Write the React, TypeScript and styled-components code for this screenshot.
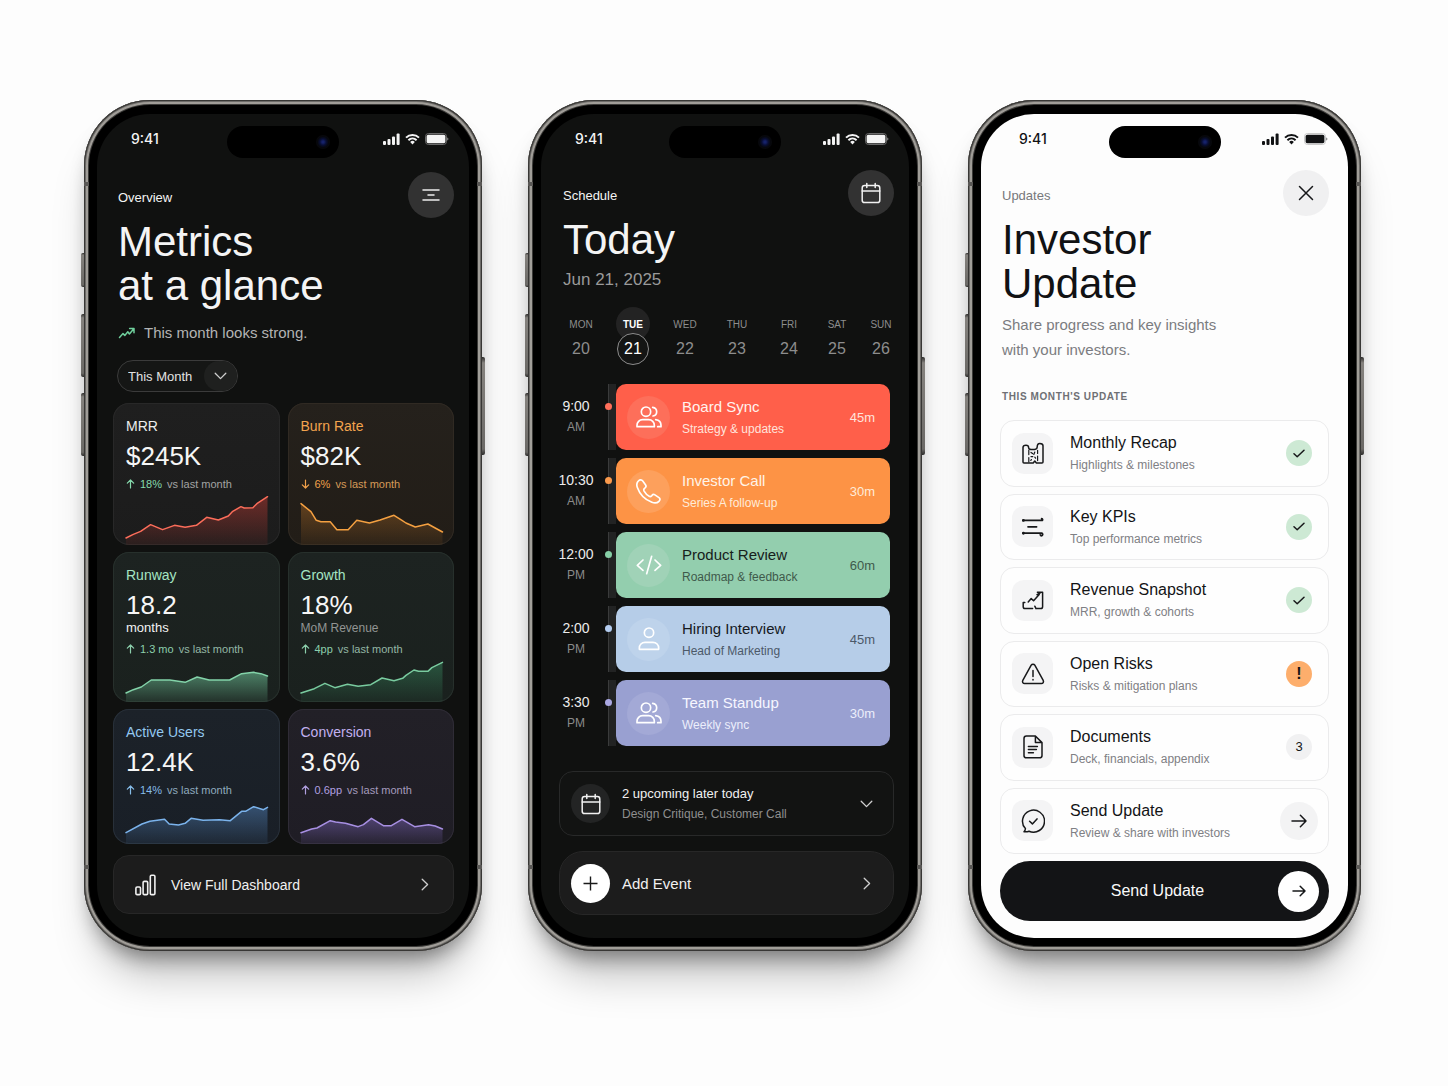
import React from "react";
import styled, { createGlobalStyle, css } from "styled-components";

const GlobalStyle = createGlobalStyle`
  *, *::before, *::after { box-sizing: border-box; }
  body {
    margin: 0;
    background: #fdfdfd;
    font-family: "Liberation Sans", Arial, sans-serif;
    -webkit-font-smoothing: antialiased;
  }
  h1, h2, h3, p, ul, ol { margin: 0; padding: 0; font-weight: 400; }
  ul, ol { list-style: none; }
  button, select { font: inherit; color: inherit; cursor: pointer; }
  svg { display: block; flex: none; }
`;

/* ---------- Page and device frame ---------- */

const Page = styled.main`
  display: grid;
  grid-template-columns: 398fr 394fr 393fr;
  align-items: start;
  gap: 46px;
  padding: 100px 87px 135px 84px;

  @media (max-width: 1240px) {
    grid-template-columns: minmax(0, 398px);
    justify-content: center;
    padding: 40px 20px 100px;
  }
`;

const Device = styled.section`
  position: relative;
  padding: 14px 13px 13px;
  border-radius: 66px;
  background: #000;
  box-shadow:
    inset 0 0 0 1px #383735,
    inset 0 0 0 2px #6d6b68,
    inset 0 0 0 4px #a09d98,
    inset 0 0 0 5px #3b3a38,
    0 14px 20px -8px rgba(0, 0, 0, 0.4),
    0 36px 44px -14px rgba(0, 0, 0, 0.26);
`;

const SideKey = styled.span<{ $side: "left" | "right"; $top: number; $length: number }>`
  position: absolute;
  ${(p) => p.$side}: -3px;
  top: ${(p) => p.$top}px;
  width: 3px;
  height: ${(p) => p.$length}px;
  border-radius: ${(p) => (p.$side === "left" ? "2px 0 0 2px" : "0 2px 2px 0")};
  background: linear-gradient(#2c2b2a, #85827e 6%, #6b6966 94%, #2c2b2a);
`;

const Antenna = styled.span<{ $side: "left" | "right"; $end: "top" | "bottom" }>`
  position: absolute;
  ${(p) => p.$side}: 0;
  ${(p) => p.$end}: 82px;
  width: 5px;
  height: 4px;
  background: #5a5856;
`;

const Screen = styled.div<{ $light?: boolean }>`
  overflow: hidden;
  border-radius: 53px;
  background: ${(p) => (p.$light ? "#fdfdfd" : "#101110")};
  color: ${(p) => (p.$light ? "#111214" : "#f4f4f4")};
`;

const StatusBar = styled.div`
  display: grid;
  grid-template-columns: 1fr 112px 1fr;
  align-items: center;
  padding-top: 12px;
`;

const Clock = styled.time<{ $light?: boolean }>`
  padding: 0 0 6px ${(p) => (p.$light ? 38 : 34)}px;
  font: 500 14px/20px Inter, "Liberation Sans", sans-serif;
`;

const Island = styled.div`
  display: flex;
  align-items: center;
  justify-content: flex-end;
  height: 32px;
  padding-right: 9px;
  border-radius: 16px;
  background: #000;
`;

const Camera = styled.span`
  width: 14px;
  height: 14px;
  border-radius: 50%;
  background: radial-gradient(circle, #16226a 0 10%, #080e34 32%, #06070c 56%, #0b0b0d 100%);
`;

const StatusIcons = styled.div`
  display: flex;
  align-items: center;
  justify-content: flex-end;
  gap: 5px;
  padding: 0 20px 6px 0;
`;

const Content = styled.div<{ $pad: string }>`
  padding: ${(p) => p.$pad};
`;

function StatusGlyphs({ light }: { light?: boolean }) {
  const shell = light ? "#c9c9c9" : "#6a6a6a";
  return (
    <StatusIcons>
      <svg width="17" height="12" viewBox="0 0 17 12" fill="currentColor" aria-hidden="true">
        <rect x="0" y="8" width="3" height="4" rx="1" />
        <rect x="4.5" y="6" width="3" height="6" rx="1" />
        <rect x="9" y="3.5" width="3" height="8.5" rx="1" />
        <rect x="13.6" y="0.6" width="3" height="11.4" rx="1" />
      </svg>
      <svg width="15" height="12" viewBox="0 0 15 12" fill="none" stroke="currentColor" strokeWidth="2" aria-hidden="true">
        <path d="M1 4.6a9.4 9.4 0 0 1 13 0" />
        <path d="M3.4 7.2a6 6 0 0 1 8.2 0" />
        <path d="M5.2 8.9a3.4 3.4 0 0 1 4.6 0L7.5 11.6z" fill="currentColor" stroke="none" />
      </svg>
      <svg width="24" height="12" viewBox="0 0 24 12" aria-hidden="true">
        <rect x="0.5" y="0.5" width="21" height="11" rx="3" fill="none" stroke={shell} />
        <rect x="1.6" y="1.8" width="18.8" height="8.4" rx="1.6" fill="currentColor" />
        <path d="M22.4 4.4c1.2.3 1.2 2.9 0 3.2z" fill={light ? "#555" : "#aaa"} />
      </svg>
    </StatusIcons>
  );
}

function Phone({ light, label, children }: { light?: boolean; label: string; children: React.ReactNode }) {
  return (
    <Device aria-label={label}>
      <SideKey $side="left" $top={153} $length={34} />
      <SideKey $side="left" $top={214} $length={63} />
      <SideKey $side="left" $top={293} $length={63} />
      <SideKey $side="right" $top={257} $length={98} />
      <Screen $light={light}>
        <StatusBar>
          <Clock $light={light}>9:41</Clock>
          <Island>
            <Camera />
          </Island>
          <StatusGlyphs light={light} />
        </StatusBar>
        {children}
      </Screen>
      <Antenna $side="left" $end="top" />
      <Antenna $side="right" $end="top" />
      <Antenna $side="left" $end="bottom" />
      <Antenna $side="right" $end="bottom" />
    </Device>
  );
}

/* ---------- Shared header ---------- */

const Header = styled.header<{ $top: number; $inset: number }>`
  display: flex;
  align-items: flex-start;
  justify-content: space-between;
  padding: ${(p) => p.$top}px 0 0 ${(p) => p.$inset}px;
`;

const Heading = styled.div`
  padding-top: 18px;
`;

const Eyebrow = styled.p<{ $muted?: boolean }>`
  font-size: 13px;
  line-height: 16px;
  color: ${(p) => (p.$muted ? "#77787b" : "inherit")};
`;

const Title = styled.h1`
  margin-top: 14px;
  font-size: 42px;
  line-height: 44px;
`;

const RoundButton = styled.button<{ $light?: boolean }>`
  display: grid;
  place-items: center;
  flex: none;
  width: 46px;
  height: 46px;
  padding: 0;
  border: 0;
  border-radius: 50%;
  background: ${(p) => (p.$light ? "#f0f0f1" : "#323232")};
`;

/* ---------- Metrics screen ---------- */

const Trend = styled.p`
  display: flex;
  align-items: center;
  gap: 8px;
  margin: 15px 0 17px 5px;
  font-size: 15px;
  line-height: 20px;
  color: #b4b4b4;
`;

const Period = styled.div`
  position: relative;
  width: 121px;
  margin-left: 4px;
`;

const PeriodSelect = styled.select`
  appearance: none;
  width: 100%;
  height: 32px;
  padding: 0 34px 0 10px;
  border: 1px solid #3b3b3b;
  border-radius: 16px;
  background: #151615;
  font-size: 13px;
  color: #e2e2e2;
`;

const PeriodChevron = styled.span`
  position: absolute;
  top: 1px;
  right: 1px;
  display: grid;
  place-items: center;
  width: 33px;
  height: 30px;
  border-radius: 15px;
  background: #1f201f;
  pointer-events: none;
`;

const MetricGrid = styled.ul`
  display: grid;
  grid-template-columns: 1fr 1fr;
  gap: 7px 8px;
  margin: 11px 0;
`;

const MetricCard = styled.li<{ $bg: string; $edge: string }>`
  overflow: hidden;
  padding: 14px 12px 0 13px;
  border-radius: 16px;
  background: ${(p) => p.$bg};
  box-shadow: inset 0 0 0 1px ${(p) => p.$edge};
`;

const MetricLabel = styled.h2<{ $color: string }>`
  font-size: 14px;
  line-height: 18px;
  color: ${(p) => p.$color};
`;

const MetricValue = styled.p`
  margin-top: 6px;
  font-size: 26px;
  line-height: 30px;
  color: #f6f6f6;
`;

const MetricUnit = styled.p<{ $muted?: boolean }>`
  font-size: ${(p) => (p.$muted ? 12 : 13)}px;
  line-height: 16px;
  color: ${(p) => (p.$muted ? "#929593" : "#f2f2f2")};
`;

const MetricChange = styled.p<{ $color: string }>`
  display: flex;
  align-items: center;
  gap: 5px;
  margin-top: 5px;
  font-size: 11px;
  line-height: 16px;
  white-space: nowrap;
  color: ${(p) => p.$color};
`;

const Versus = styled.span<{ $color: string }>`
  color: ${(p) => p.$color};
`;

type Metric = {
  id: string;
  label: string;
  value: string;
  unit?: string;
  unitMuted?: boolean;
  down?: boolean;
  change: string;
  bg: string;
  edge: string;
  labelColor: string;
  changeColor: string;
  versusColor: string;
  line: string;
  fill: string;
  height: number;
  points: string;
};

const metrics: Metric[] = [
  {
    id: "mrr", label: "MRR", value: "$245K", change: "18%",
    bg: "linear-gradient(#1f1f1f, #1c1c1c)", edge: "#282828",
    labelColor: "#ececec", changeColor: "#86d9ac", versusColor: "#a3a3a3",
    line: "#fb6d5a", fill: "#8f322d", height: 53,
    points: "0,138 22,127 44,118 74,98 110,113 146,100 178,106 212,100 243,76 278,84 308,72 320,59 346,44 356,48 382,47 394,35 426,14",
  },
  {
    id: "burn", label: "Burn Rate", value: "$82K", down: true, change: "6%",
    bg: "linear-gradient(#25211c, #221d17)", edge: "#302a23",
    labelColor: "#f3a44e", changeColor: "#f0a04a", versusColor: "#d59a58",
    line: "#f4a041", fill: "#7c4f20", height: 53,
    points: "0,35 30,59 46,85 60,89 88,89 108,113 142,113 168,85 206,93 238,84 280,70 304,85 316,93 344,105 382,96 426,120",
  },
  {
    id: "runway", label: "Runway", value: "18.2", unit: "months", change: "1.3 mo",
    bg: "linear-gradient(#1d2321, #1a211e)", edge: "#27302c",
    labelColor: "#a5e5c3", changeColor: "#8ccfac", versusColor: "#94b7a5",
    line: "#83d3a9", fill: "#61a884", height: 45,
    points: "0,108 22,98 46,90 76,69 132,69 178,76 214,60 250,69 312,69 348,50 384,46 406,50 426,57",
  },
  {
    id: "growth", label: "Growth", value: "18%", unit: "MoM Revenue", unitMuted: true, change: "4pp",
    bg: "linear-gradient(#1d2321, #1a211e)", edge: "#27302c",
    labelColor: "#a5e5c3", changeColor: "#8ccfac", versusColor: "#94b7a5",
    line: "#79cb9f", fill: "#2f6a4c", height: 45,
    points: "0,108 40,95 72,79 102,92 140,82 172,88 210,83 244,63 280,71 306,64 316,55 340,39 354,43 382,43 394,32 426,16",
  },
  {
    id: "users", label: "Active Users", value: "12.4K", change: "14%",
    bg: "linear-gradient(#1c2229, #191f27)", edge: "#283039",
    labelColor: "#93c8f0", changeColor: "#86bce8", versusColor: "#8faabe",
    line: "#7bb3ec", fill: "#41658f", height: 46,
    points: "0,104 48,78 72,70 116,64 130,78 158,81 178,76 196,61 232,67 282,65 314,68 348,40 360,40 384,26 414,35 426,28",
  },
  {
    id: "conversion", label: "Conversion", value: "3.6%", change: "0.6pp",
    bg: "linear-gradient(#222027, #1f1d25)", edge: "#2f2c36",
    labelColor: "#c2b0f0", changeColor: "#b09fe0", versusColor: "#a59bbd",
    line: "#a78fe2", fill: "#62518f", height: 46,
    points: "0,104 32,93 48,90 88,68 104,72 134,76 172,86 188,80 212,61 248,83 272,83 304,64 342,86 384,80 404,84 426,93",
  },
];

const ChartSvg = styled.svg`
  width: 100%;
  overflow: visible;
`;

function Sparkline({ metric }: { metric: Metric }) {
  const bottom = metric.height * 3;
  const gradientId = `fill-${metric.id}`;
  return (
    <ChartSvg height={metric.height} viewBox={`0 0 426 ${bottom}`} preserveAspectRatio="none" aria-hidden="true">
      <defs>
        <linearGradient id={gradientId} x1="0" y1="0" x2="0" y2="1">
          <stop offset="0" stopColor={metric.fill} stopOpacity="0.7" />
          <stop offset="1" stopColor={metric.fill} stopOpacity="0.12" />
        </linearGradient>
      </defs>
      <polygon points={`0,${bottom} ${metric.points} 426,${bottom}`} fill={`url(#${gradientId})`} />
      <polyline
        points={metric.points}
        fill="none"
        stroke={metric.line}
        strokeWidth="1.5"
        strokeLinejoin="round"
        strokeLinecap="round"
        vectorEffect="non-scaling-stroke"
      />
    </ChartSvg>
  );
}

function ArrowGlyph({ down }: { down?: boolean }) {
  return (
    <svg width="9" height="10" viewBox="0 0 9 10" fill="none" stroke="currentColor" strokeWidth="1.2" strokeLinecap="round" strokeLinejoin="round" aria-hidden="true">
      <path d={down ? "M4.5 1v8M1.3 5.8 4.5 9l3.2-3.2" : "M4.5 9V1M1.3 4.2 4.5 1l3.2 3.2"} />
    </svg>
  );
}

const ActionBar = styled.button<{ $pad: string; $height: number; $radius: number; $gap: number; $size: number }>`
  display: flex;
  align-items: center;
  gap: ${(p) => p.$gap}px;
  width: 100%;
  height: ${(p) => p.$height}px;
  padding: ${(p) => p.$pad};
  border: 1px solid #272727;
  border-radius: ${(p) => p.$radius}px;
  background: #1c1c1c;
  font-size: ${(p) => p.$size}px;
  color: #f0f0f0;
  text-align: left;
`;

const Grow = styled.span`
  flex: 1;
`;

function Chevron({ direction }: { direction: "right" | "down" }) {
  const right = direction === "right";
  return (
    <svg width={right ? 8 : 13} height={right ? 13 : 8} viewBox={right ? "0 0 8 13" : "0 0 13 8"} fill="none" stroke="#cfcfcf" strokeWidth="1.3" strokeLinecap="round" strokeLinejoin="round" aria-hidden="true">
      <path d={right ? "M1.2 1.2 6.6 6.5 1.2 11.8" : "M1.2 1.2 6.5 6.6 11.8 1.2"} />
    </svg>
  );
}

function MetricsScreen() {
  return (
    <Phone label="Metrics overview">
      <Content $pad="0 15px 24px 16px">
        <Header $top={14} $inset={5}>
          <Heading>
            <Eyebrow>Overview</Eyebrow>
            <Title>
              Metrics
              <br />
              at a glance
            </Title>
          </Heading>
          <RoundButton aria-label="Menu">
            <svg width="18" height="12" viewBox="0 0 18 12" stroke="#ededed" strokeWidth="1.5" strokeLinecap="round" aria-hidden="true">
              <path d="M1 1h16M6 6h6M1 11h16" />
            </svg>
          </RoundButton>
        </Header>
        <Trend>
          <svg width="18" height="12" viewBox="0 0 18 12" fill="none" stroke="#6fcf9c" strokeWidth="1.5" strokeLinecap="round" strokeLinejoin="round" aria-hidden="true">
            <path d="M1.5 10.4 5 6.6l1.800 1.800L9.800 4.800l1.600 2.200 4-4.800M11.600 1.500h4.400v4.300" />
          </svg>
          This month looks strong.
        </Trend>
        <Period>
          <PeriodSelect aria-label="Period" defaultValue="month">
            <option value="month">This Month</option>
            <option value="quarter">This Quarter</option>
            <option value="year">This Year</option>
          </PeriodSelect>
          <PeriodChevron>
            <Chevron direction="down" />
          </PeriodChevron>
        </Period>
        <MetricGrid>
          {metrics.map((m) => (
            <MetricCard key={m.id} $bg={m.bg} $edge={m.edge}>
              <MetricLabel $color={m.labelColor}>{m.label}</MetricLabel>
              <MetricValue>{m.value}</MetricValue>
              {m.unit && <MetricUnit $muted={m.unitMuted}>{m.unit}</MetricUnit>}
              <MetricChange $color={m.changeColor}>
                <ArrowGlyph down={m.down} />
                <span>{m.change}</span>
                <Versus $color={m.versusColor}>vs last month</Versus>
              </MetricChange>
              <Sparkline metric={m} />
            </MetricCard>
          ))}
        </MetricGrid>
        <ActionBar $pad="0 24px 0 21px" $height={59} $radius={16} $gap={15} $size={14}>
          <svg width="21" height="22" viewBox="0 0 21 22" fill="none" stroke="#f0f0f0" strokeWidth="1.6" aria-hidden="true">
            <rect x="0.9" y="13" width="4.6" height="7.6" rx="1.2" />
            <rect x="8.1" y="7.4" width="4.6" height="13.2" rx="1.2" />
            <rect x="15.3" y="1.2" width="4.6" height="19.4" rx="1.2" />
          </svg>
          <Grow>View Full Dashboard</Grow>
          <Chevron direction="right" />
        </ActionBar>
      </Content>
    </Phone>
  );
}

/* ---------- Schedule screen ---------- */

const DateLine = styled.p`
  margin: 7px 0 16px 4px;
  font-size: 17px;
  line-height: 22px;
  color: #9a9a9a;
`;

const Week = styled.ol`
  display: grid;
  grid-template-columns: repeat(5, 52fr) repeat(2, 44fr);
  margin: 0 -9px 19px -4px;
`;

const DayButton = styled.button<{ $active?: boolean }>`
  display: flex;
  flex-direction: column;
  align-items: center;
  width: 100%;
  padding: 0;
  border: 0;
  background: none;
  color: ${(p) => (p.$active ? "#ffffff" : "#8d8d8d")};
`;

const DayName = styled.span<{ $active?: boolean }>`
  display: grid;
  place-items: center;
  width: 34px;
  height: 34px;
  border-radius: 50%;
  background: ${(p) => (p.$active ? "#232323" : "transparent")};
  font-size: 10px;
  font-weight: ${(p) => (p.$active ? 700 : 400)};
`;

const DayNumber = styled.span<{ $active?: boolean }>`
  display: grid;
  place-items: center;
  width: 32px;
  height: 32px;
  margin-top: -8px;
  border: 1px solid ${(p) => (p.$active ? "#8c8c8c" : "transparent")};
  border-radius: 50%;
  background: ${(p) => (p.$active ? "#141514" : "transparent")};
  font-size: 16px;
`;

const days = [
  ["MON", "20"], ["TUE", "21"], ["WED", "22"], ["THU", "23"], ["FRI", "24"], ["SAT", "25"], ["SUN", "26"],
];

const Agenda = styled.ol`
  display: grid;
  gap: 8px;
  margin: 0 4px 25px 0;
`;

const Slot = styled.li`
  display: grid;
  grid-template-columns: 34px 15px 8px 1fr;
  height: 66px;
`;

const SlotTime = styled.time`
  display: flex;
  flex-direction: column;
  align-items: center;
  padding-top: 12px;
  font-size: 14px;
  line-height: 21px;
  white-space: nowrap;
  color: #ececec;
`;

const Meridiem = styled.span`
  font-size: 12px;
  color: #8b8b8b;
`;

const Rail = styled.span<{ $color: string }>`
  position: relative;
  grid-column: 3;
  border-left: 1px solid #3a3b3b;
  background: #222323;

  &::before {
    content: "";
    position: absolute;
    top: 19px;
    left: -4px;
    width: 7px;
    height: 7px;
    border-radius: 50%;
    background: ${(p) => p.$color};
  }
`;

const EventCard = styled.button<{ $bg: string; $ink: string }>`
  display: flex;
  align-items: center;
  gap: 12px;
  padding: 0 15px 0 11px;
  border: 0;
  border-radius: 10px;
  background: ${(p) => p.$bg};
  color: ${(p) => p.$ink};
  text-align: left;
`;

const EventIcon = styled.span<{ $bg: string }>`
  display: grid;
  place-items: center;
  flex: none;
  width: 43px;
  height: 43px;
  border-radius: 50%;
  background: ${(p) => p.$bg};
  color: #fff;
`;

const TextStack = styled.span`
  flex: 1;
  padding-top: 2px;
`;

const EventTitle = styled.span`
  display: block;
  font-size: 15px;
  line-height: 22px;
`;

const EventNote = styled.span<{ $color: string }>`
  display: block;
  font-size: 12px;
  line-height: 22px;
  color: ${(p) => p.$color};
`;

const Duration = styled.span<{ $color: string }>`
  font-size: 13px;
  color: ${(p) => p.$color};
`;

function PeopleIcon() {
  return (
    <svg width="26" height="22" viewBox="0 0 78 66" fill="none" stroke="currentColor" strokeWidth="5" strokeLinecap="round" strokeLinejoin="round" aria-hidden="true">
      <circle cx="30" cy="17" r="14" />
      <path d="M3 62v-4c0-9 7-17 17-17h18c10 0 17 8 17 17v4z" />
      <path d="M50 4c7 1 12 6 12 13s-5 12-11 13" />
      <path d="M59 41c10 1 16 8 16 17v4H65" />
    </svg>
  );
}

function PersonIcon() {
  return (
    <svg width="22" height="24" viewBox="0 0 66 72" fill="none" stroke="currentColor" strokeWidth="5" strokeLinejoin="round" aria-hidden="true">
      <circle cx="33" cy="17" r="14" />
      <path d="M4 67v-4c0-9 7-17 17-17h24c10 0 17 8 17 17v4z" />
    </svg>
  );
}

function HandsetIcon() {
  return (
    <svg width="25" height="25" viewBox="0 0 74 74" fill="none" stroke="currentColor" strokeWidth="5" strokeLinejoin="round" aria-hidden="true">
      <path d="M7 6c5-5 10-4 13 0l8 11c3 4 2 7-2 10-4 3-4 5-2 9 4 7 9 12 15 15 3 2 5 1 8-2 3-4 6-4 9-2l12 8c4 3 4 7 0 11-6 6-13 6-21 3C27 61 11 45 4 25 1 17 2 11 7 6z" />
    </svg>
  );
}

function CodeIcon() {
  return (
    <svg width="26" height="20" viewBox="0 0 78 60" fill="none" stroke="currentColor" strokeWidth="5" strokeLinecap="round" strokeLinejoin="round" aria-hidden="true">
      <path d="M21 15 4 31l17 15M57 15l17 16-17 15M47 4 32 56" />
    </svg>
  );
}

function CalendarIcon() {
  return (
    <svg width="20" height="22" viewBox="0 0 20 22" fill="none" stroke="#f2f2f2" strokeWidth="1.5" strokeLinecap="round" strokeLinejoin="round" aria-hidden="true">
      <rect x="1.2" y="3.6" width="17.6" height="17" rx="2.4" />
      <path d="M1.2 9h17.6M5.8 1.6v4M14.2 1.6v4" />
    </svg>
  );
}

const events = [
  { time: "9:00", half: "AM", title: "Board Sync", note: "Strategy & updates", length: "45m", bg: "#ff5f4a", dot: "#ff6f5a", disc: "#fd6f5a", ink: "#fff3ee", soft: "#ffe3dc", icon: <PeopleIcon /> },
  { time: "10:30", half: "AM", title: "Investor Call", note: "Series A follow-up", length: "30m", bg: "#fd9345", dot: "#fb9a4c", disc: "#fda05c", ink: "#fff4e8", soft: "#ffebd8", icon: <HandsetIcon /> },
  { time: "12:00", half: "PM", title: "Product Review", note: "Roadmap & feedback", length: "60m", bg: "#93ceae", dot: "#86cfa6", disc: "#a0d2b7", ink: "#16211b", soft: "#3f5a4b", icon: <CodeIcon /> },
  { time: "2:00", half: "PM", title: "Hiring Interview", note: "Head of Marketing", length: "45m", bg: "#b6cde8", dot: "#b4cdf0", disc: "#bed3eb", ink: "#15191f", soft: "#4c5968", icon: <PersonIcon /> },
  { time: "3:30", half: "PM", title: "Team Standup", note: "Weekly sync", length: "30m", bg: "#99a0d1", dot: "#aaa8e2", disc: "#a3a9d6", ink: "#f6f6ff", soft: "#eceefb", icon: <PeopleIcon /> },
];

const Upcoming = styled.button`
  display: flex;
  align-items: center;
  gap: 12px;
  width: 100%;
  height: 65px;
  margin-bottom: 15px;
  padding: 0 20px 0 11px;
  border: 1px solid #282929;
  border-radius: 14px;
  background: #121312;
  text-align: left;
`;

const Disc = styled.span<{ $bg: string; $size: number }>`
  display: grid;
  place-items: center;
  flex: none;
  width: ${(p) => p.$size}px;
  height: ${(p) => p.$size}px;
  border-radius: 50%;
  background: ${(p) => p.$bg};
`;

const UpcomingTitle = styled.span`
  display: block;
  font-size: 13px;
  line-height: 20px;
  color: #f0f0f0;
`;

const UpcomingNote = styled.span`
  display: block;
  font-size: 12px;
  line-height: 20px;
  color: #8f8f8f;
`;

function ScheduleScreen() {
  return (
    <Phone label="Schedule">
      <Content $pad="0 15px 23px 18px">
        <Header $top={12} $inset={4}>
          <Heading>
            <Eyebrow>Schedule</Eyebrow>
            <Title>Today</Title>
          </Heading>
          <RoundButton aria-label="Open calendar">
            <CalendarIcon />
          </RoundButton>
        </Header>
        <DateLine>Jun 21, 2025</DateLine>
        <Week>
          {days.map(([name, number]) => {
            const active = number === "21";
            return (
              <li key={name}>
                <DayButton $active={active} aria-pressed={active}>
                  <DayName $active={active}>{name}</DayName>
                  <DayNumber $active={active}>{number}</DayNumber>
                </DayButton>
              </li>
            );
          })}
        </Week>
        <Agenda>
          {events.map((e) => (
            <Slot key={e.title}>
              <SlotTime>
                <span>{e.time}</span>
                <Meridiem>{e.half}</Meridiem>
              </SlotTime>
              <Rail $color={e.dot} />
              <EventCard $bg={e.bg} $ink={e.ink}>
                <EventIcon $bg={e.disc}>{e.icon}</EventIcon>
                <TextStack>
                  <EventTitle>{e.title}</EventTitle>
                  <EventNote $color={e.soft}>{e.note}</EventNote>
                </TextStack>
                <Duration $color={e.soft}>{e.length}</Duration>
              </EventCard>
            </Slot>
          ))}
        </Agenda>
        <Upcoming>
          <Disc $size={39} $bg="#232424">
            <CalendarIcon />
          </Disc>
          <Grow>
            <UpcomingTitle>2 upcoming later today</UpcomingTitle>
            <UpcomingNote>Design Critique, Customer Call</UpcomingNote>
          </Grow>
          <Chevron direction="down" />
        </Upcoming>
        <ActionBar $pad="0 22px 0 11px" $height={64} $radius={24} $gap={12} $size={15}>
          <Disc $size={39} $bg="#ffffff">
            <svg width="15" height="15" viewBox="0 0 15 15" stroke="#1a1a1a" strokeWidth="1.4" aria-hidden="true">
              <path d="M7.5 0.5v14M0.5 7.5h14" />
            </svg>
          </Disc>
          <Grow>Add Event</Grow>
          <Chevron direction="right" />
        </ActionBar>
      </Content>
    </Phone>
  );
}

/* ---------- Investor update screen ---------- */

const Lead = styled.p`
  max-width: 240px;
  margin: 6px 0 28px 2px;
  font-size: 15px;
  line-height: 25px;
  color: #7b7c80;
`;

const SectionLabel = styled.h2`
  margin: 0 0 16px 2px;
  font-size: 10px;
  font-weight: 700;
  line-height: 14px;
  letter-spacing: 0.06em;
  color: #6f7075;
`;

const UpdateList = styled.ul`
  display: grid;
  grid-auto-rows: 1fr;
  gap: 7px;
  min-height: 434px;
  margin-bottom: 7px;
`;

const UpdateRow = styled.button`
  display: flex;
  align-items: center;
  gap: 17px;
  width: 100%;
  height: 100%;
  padding: 0 10px 0 11px;
  border: 1px solid #ebebec;
  border-radius: 14px;
  background: #fefefe;
  text-align: left;
`;

const IconTile = styled.span`
  display: grid;
  place-items: center;
  flex: none;
  width: 41px;
  height: 41px;
  border-radius: 12px;
  background: #f4f4f5;
`;

const RowTitle = styled.span`
  display: block;
  font-size: 16px;
  line-height: 23px;
  color: #131416;
`;

const RowNote = styled.span`
  display: block;
  font-size: 12px;
  line-height: 23px;
  color: #7f8084;
`;

const badgeTone = {
  done: css`background: #cde9d4;`,
  risk: css`background: #fdae6c; font-weight: 700; font-size: 16px;`,
  count: css`background: #f1f1f2;`,
  go: css`background: #f3f3f4; width: 38px; height: 38px; margin: 0;`,
};

const Badge = styled.span<{ $tone: keyof typeof badgeTone }>`
  display: grid;
  place-items: center;
  flex: none;
  width: 26px;
  height: 26px;
  margin: 0 6px;
  border-radius: 50%;
  font-size: 13px;
  line-height: 16px;
  color: #141517;
  ${(p) => badgeTone[p.$tone]}
`;

const SendButton = styled.button`
  display: flex;
  align-items: center;
  width: 100%;
  height: 60px;
  padding: 0 10px 0 37px;
  border: 0;
  border-radius: 30px;
  background: #131416;
  font-size: 16px;
  color: #fafafa;
  text-align: center;
`;

function LineIcon({ width, height, children, stroke = 1.5 }: { width: number; height: number; children: React.ReactNode; stroke?: number }) {
  return (
    <svg width={width} height={height} viewBox={`0 0 ${width} ${height}`} fill="none" stroke="#17181a" strokeWidth={stroke} strokeLinecap="round" strokeLinejoin="round" aria-hidden="true">
      {children}
    </svg>
  );
}

const CheckMark = () => (
  <LineIcon width={12} height={9}>
    <path d="M1 4.8 4.2 7.8 11 1.2" />
  </LineIcon>
);

const ArrowMark = ({ size }: { size: 14 | 16 }) =>
  size === 16 ? (
    <LineIcon width={16} height={14}>
      <path d="M1 7h14M9.4 1.3 15 7l-5.6 5.7" />
    </LineIcon>
  ) : (
    <LineIcon width={14} height={12}>
      <path d="M1 6h12M8.2 1.2 13 6l-4.8 4.8" />
    </LineIcon>
  );

const updates: { title: string; note: string; icon: React.ReactNode; tone: keyof typeof badgeTone; badge: React.ReactNode }[] = [
  {
    title: "Monthly Recap", note: "Highlights & milestones", tone: "done", badge: <CheckMark />,
    icon: (
      <LineIcon width={22} height={22}>
        <path d="M1 5.4C1 3.6 2.4 3.2 4 3.2S6.6 4 6.6 5.4c0 1.6 1.2 2.2 4 2.2 3.4 0 4.6-.6 4.6-2.6 0-2.4.4-3.6 2.6-3.6S21 2.2 21 3.8V20c0 .8-.4 1-1 1h-5.6l-1.6-2-1.6 2H2c-.7 0-1-.3-1-1z" />
        <path d="M6.8 8v4.600M6.8 15.6V20M15.6 8.400v3M15.6 14v4.600M9 10.4l1.6 1.200M12.8 10l-1 2.400M9 14.6h1.800M12.8 15.2l.8 1M9.4 17.6l-.6.8" strokeWidth="1.2" />
      </LineIcon>
    ),
  },
  {
    title: "Key KPIs", note: "Top performance metrics", tone: "done", badge: <CheckMark />,
    icon: (
      <LineIcon width={22} height={20}>
        <path d="M1.200 3.4h18.800c.9 0 .9-1.600-.4-1.800M6 9.800h8.600M1.200 16.200H19.800c1.200 0 1.400 2.600-.4 2.600-.7 0-1-.4-1.200-1" stroke="#17181a" strokeWidth="1.7" />
        <circle cx="1.400" cy="3.400" r="0.700" fill="#17181a" />
        <circle cx="1.400" cy="16.200" r="0.700" fill="#17181a" />
      </LineIcon>
    ),
  },
  {
    title: "Revenue Snapshot", note: "MRR, growth & cohorts", tone: "done", badge: <CheckMark />,
    icon: (
      <LineIcon width={22} height={20}>
        <path d="M1.2 12.4v4.4c0 1.2.6 1.8 1.8 1.8h7.6M1.2 12.4h1.600M6.2 12l3-3.4 2.4 2.2 5.6-6.400M15.4 2.2h5.2v14.6c0 1.2-.6 1.8-1.8 1.8h-4M15 4.6l4.6-2.400M12.8 16.2l1.2 2.4" />
      </LineIcon>
    ),
  },
  {
    title: "Open Risks", note: "Risks & mitigation plans", tone: "risk", badge: "!",
    icon: (
      <LineIcon width={24} height={22}>
        <path d="M10.2 2.2c.8-1.4 2.8-1.4 3.6 0l8.4 15.2c.8 1.5-.2 3.2-1.8 3.2H3.6c-1.6 0-2.6-1.7-1.8-3.2zM12 7.6v6M12 16.6v.4" />
      </LineIcon>
    ),
  },
  {
    title: "Documents", note: "Deck, financials, appendix", tone: "count", badge: "3",
    icon: (
      <LineIcon width={20} height={24}>
        <path d="M3.4 1h9L19 7.6v12.8c0 1.5-1 2.4-2.4 2.4H3.4C2 22.8 1 21.9 1 20.4V3.4C1 1.9 2 1 3.4 1zM12.4 1v6.6H19M5.4 11.4h9M5.4 14.6h8M5.4 17.8h5" />
      </LineIcon>
    ),
  },
  {
    title: "Send Update", note: "Review & share with investors", tone: "go", badge: <ArrowMark size={16} />,
    icon: (
      <LineIcon width={24} height={24}>
        <path d="M4.4 19.6A11 11 0 1 1 8 22.2c-1.6.6-3.2.7-5 .5 1-1 1.5-2 1.4-3.1zM8.6 12.2l2.8 2.7 4.6-5" />
      </LineIcon>
    ),
  },
];

function InvestorScreen() {
  return (
    <Phone light label="Investor update">
      <Content $pad="0 19px 17px">
        <Header $top={12} $inset={2}>
          <Heading>
            <Eyebrow $muted>Updates</Eyebrow>
            <Title>
              Investor
              <br />
              Update
            </Title>
          </Heading>
          <RoundButton $light aria-label="Close">
            <LineIcon width={16} height={16}>
              <path d="M1.500 1.500l13 13M14.500 1.500l-13 13" />
            </LineIcon>
          </RoundButton>
        </Header>
        <Lead>Share progress and key insights with your investors.</Lead>
        <SectionLabel>THIS MONTH'S UPDATE</SectionLabel>
        <UpdateList>
          {updates.map((u) => (
            <li key={u.title}>
              <UpdateRow>
                <IconTile>{u.icon}</IconTile>
                <TextStack>
                  <RowTitle>{u.title}</RowTitle>
                  <RowNote>{u.note}</RowNote>
                </TextStack>
                <Badge $tone={u.tone}>{u.badge}</Badge>
              </UpdateRow>
            </li>
          ))}
        </UpdateList>
        <SendButton>
          <Grow>Send Update</Grow>
          <Disc $size={41} $bg="#ffffff">
            <ArrowMark size={14} />
          </Disc>
        </SendButton>
      </Content>
    </Phone>
  );
}

export default function App() {
  return (
    <>
      <GlobalStyle />
      <Page>
        <MetricsScreen />
        <ScheduleScreen />
        <InvestorScreen />
      </Page>
    </>
  );
}
